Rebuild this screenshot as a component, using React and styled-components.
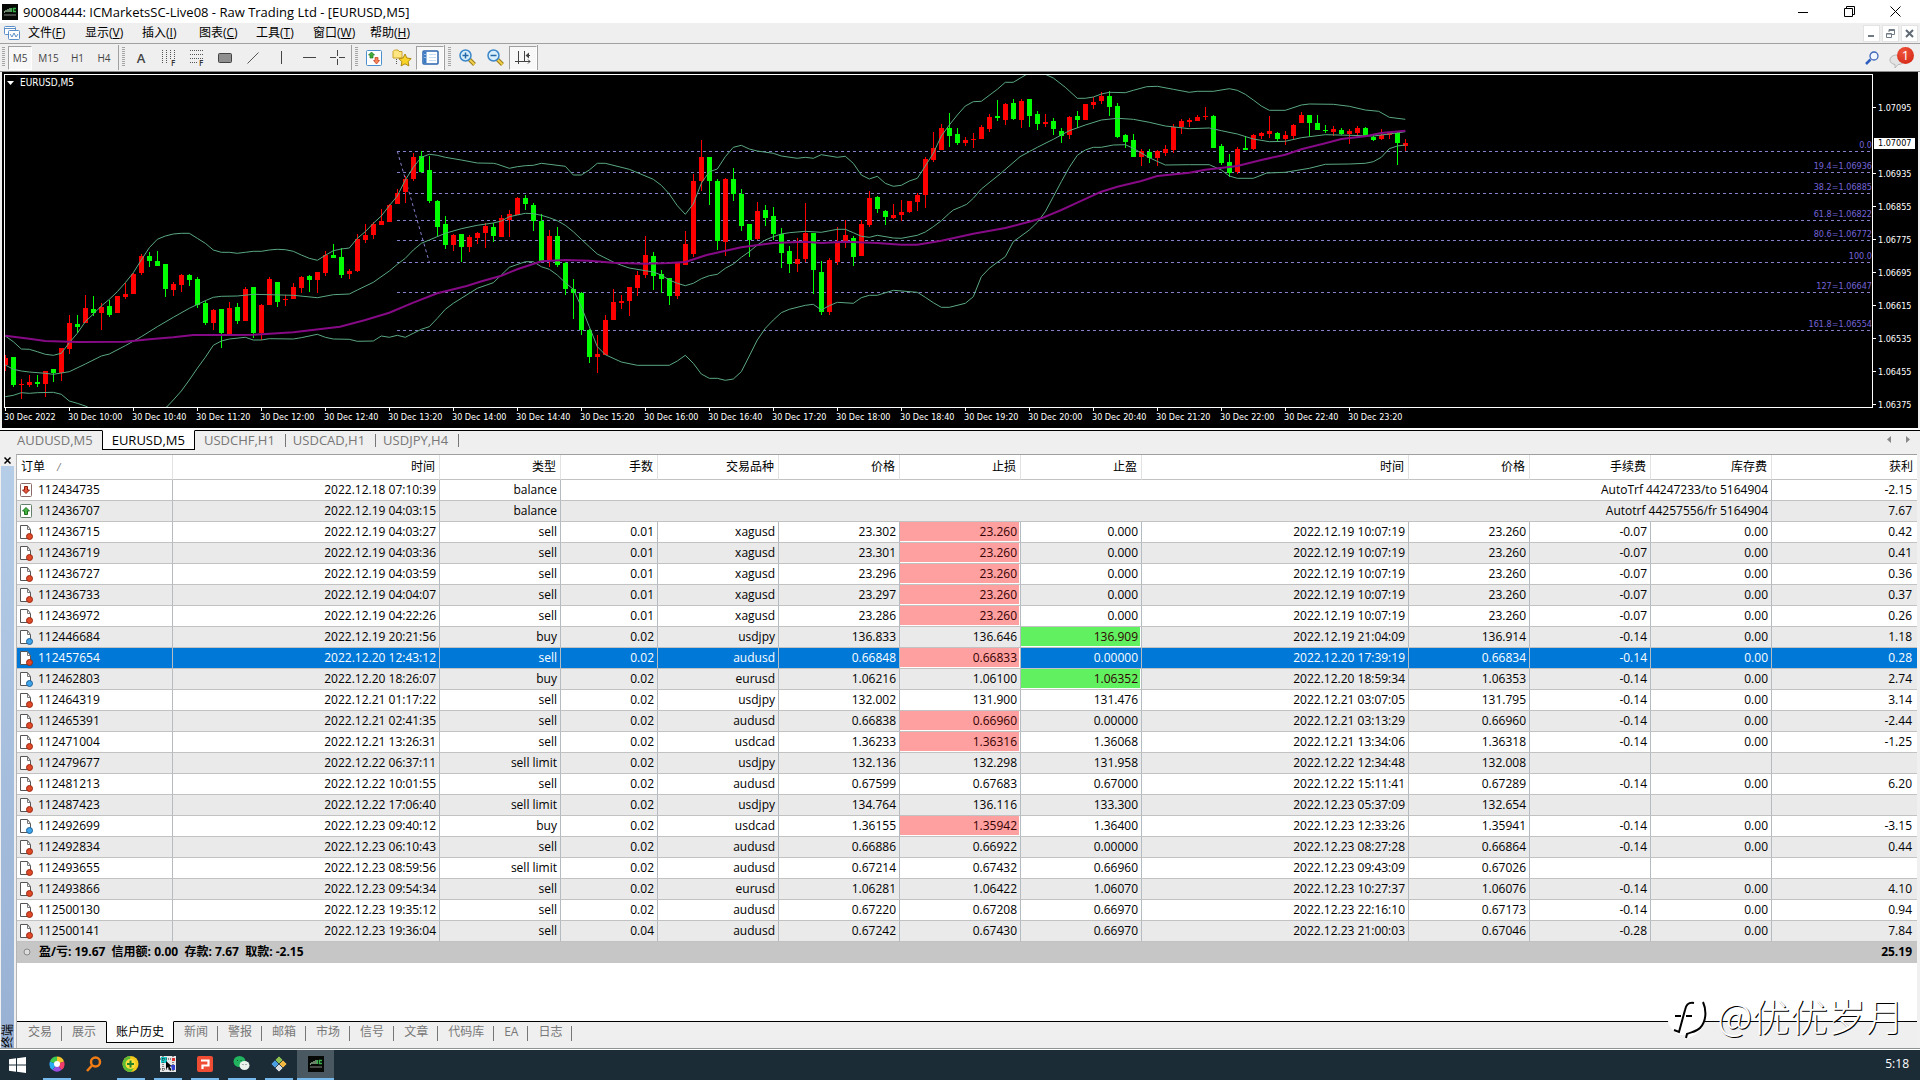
import React, { useState } from 'react';
import styled, { createGlobalStyle, css } from 'styled-components';

const GlobalStyle = createGlobalStyle`
  * {
    box-sizing: border-box;
  }
  body {
    margin: 0;
    background: #f0f0f0;
    font-family: "Open Sans", "Noto Sans CJK SC", sans-serif;
    font-size: 12px;
    line-height: 16px;
    color: #000;
  }
  button {
    font: inherit;
    color: inherit;
    background: none;
    border: none;
    padding: 0;
    margin: 0;
  }
  svg {
    display: block;
    flex-shrink: 0;
  }
`;

/* ---------- data ---------- */

const menus = ['文件(F)', '显示(V)', '插入(I)', '图表(C)', '工具(T)', '窗口(W)', '帮助(H)'];
const frames = [['M5', 24], ['M15', 33], ['H1', 25], ['H4', 28]];
const chartTabs = ['AUDUSD,M5', 'EURUSD,M5', 'USDCHF,H1', 'USDCAD,H1', 'USDJPY,H4'];
const panelTabs = ['交易', '展示', '账户历史', '新闻', '警报', '邮箱', '市场', '信号', '文章', '代码库', 'EA', '日志'];

const times = ['2022', '10:00', '10:40', '11:20', '12:00', '12:40', '13:20', '14:00', '14:40', '15:20', '16:00', '16:40',
  '17:20', '18:00', '18:40', '19:20', '20:00', '20:40', '21:20', '22:00', '22:40', '23:20'];
const prices = ['1.07095', '', '1.06935', '1.06855', '1.06775', '1.06695', '1.06615', '1.06535', '1.06455', '1.06375'];

const fibs = [
  [76, '0.0'], [97, '19.4=1.06936'], [118, '38.2=1.06885'], [145, '61.8=1.06822'],
  [165, '80.6=1.06772'], [187, '100.0'], [217, '127=1.06647'], [255, '161.8=1.06554'],
];

// colour, body top, body bottom, high, low - three units to a pixel
const candles = `r893,915,885,932 g892,974,892,980 r971,975,958,1018 r965,974,945,980 g966,972,945,980 r933,971,933,1012
g927,938,927,967 r864,940,864,962 r789,866,765,881 g792,800,765,820 r744,788,706,788 g747,758,708,768 r740,758,728,810
g738,764,720,770 r709,758,709,758 r702,710,668,718 r642,701,640,701 r588,638,583,645 g588,602,576,620 g603,617,572,617
g612,686,612,710 r672,689,666,708 r645,675,642,695 g645,660,641,677 g657,734,652,745 g730,788,723,794 r750,790,746,810
g747,818,747,863 r744,822,727,826 g741,782,730,792 r687,782,682,782 g682,818,682,833 r735,818,731,840 r657,734,651,734
g667,725,667,740 r716,720,705,738 r682,716,668,716 r652,684,648,698 g648,659,645,696 r636,660,636,698 r586,638,574,648
g586,594,551,594 g592,644,565,654 r633,641,627,656 r538,633,522,636 r526,541,493,550 r493,525,487,538 r484,494,446,494
r436,486,432,486 r400,432,388,432 r358,395,348,430 r291,356,280,364 g289,336,273,338 g331,422,288,428 g423,500,420,528
g492,554,468,566 r525,556,521,574 g522,560,522,606 r532,560,526,575 r519,534,515,553 r499,519,490,565 g501,528,490,545
r473,530,466,530 r462,480,450,530 r414,466,411,466 g414,432,405,450 g435,482,430,512 g483,602,462,606 r528,600,511,620
g528,615,500,620 g608,687,606,706 g688,698,656,776 g699,811,697,824 g811,890,808,910 r882,890,826,938 r780,884,766,884
r726,780,688,780 r723,728,705,748 r682,724,680,768 r645,684,634,708 r586,645,528,655 g588,647,577,690 g642,656,630,698
g655,707,655,735 r610,708,608,718 r552,614,514,614 r363,581,343,592 r291,363,241,392 g291,362,291,435 g364,542,356,570
r357,545,354,588 g357,402,323,424 g402,498,387,512 g492,540,492,590 r453,537,426,540 g450,474,434,498 g468,522,440,540
g522,579,504,624 g573,612,558,640 r598,611,534,637 r519,597,430,605 g519,629,519,702 g637,756,603,764 r600,756,594,766
r546,606,500,615 r525,550,480,563 g534,590,528,618 r492,587,480,587 r414,494,394,502 g411,447,408,460 g453,470,450,494
r465,474,432,478 r457,465,420,482 r423,456,423,460 r405,426,400,454 r297,405,291,444 r265,300,216,305 r205,270,193,270
g204,228,160,262 g222,250,204,255 r240,248,231,258 r236,240,220,265 r201,236,194,236 r171,207,163,215 g168,174,120,184
r131,180,130,195 g130,178,117,180 r123,180,117,204 g117,167,117,200 g162,192,153,210 r187,193,163,200 g183,207,175,226
g213,228,205,250 r171,226,168,237 g168,180,154,205 r132,180,132,180 r126,135,112,148 r108,123,97,132 g108,141,94,168
g138,231,130,234 g225,247,222,264 g240,291,222,291 r272,291,268,318 g276,294,268,308 r273,294,270,318 r267,278,255,288
r201,270,192,278 r183,201,178,222 r181,185,173,200 r172,182,165,184 r168,171,140,180 g168,264,164,264 g258,309,252,315
g307,339,282,352 r267,336,260,342 g265,270,228,270 r226,267,222,270 r220,228,216,237 r213,221,168,235 g219,237,216,246
r225,238,213,254 r196,229,192,237 r166,189,156,189 g166,188,164,228 g189,210,165,210 g210,214,195,219 r207,216,198,228
g210,222,204,225 r213,221,208,252 r204,219,198,232 g204,225,200,228 g230,241,225,243 r225,238,208,240 r220,226,215,238
g220,249,215,316 r249,258,236,274`.split(/\s+/).map((s) => [s[0], ...s.slice(1).split(',').map(Number)]);

// each line comes in parts, a part starts at its own x
const upper = [
  [0, '16,828 40,845 64,867 88,868 112,875 136,883 160,886 184,880 208,848 232,820 256,785 280,762 304,738 328,718 352,695 376,668 400,638 424,600 448,563 472,538 496,528 520,522 544,520 568,520 592,535 616,550 640,570 664,577 688,577 712,580 736,577 760,574 784,574 808,570 832,568 856,569 880,574 904,585 928,595 952,601 976,586 1000,572 1024,567 1048,564 1072,535 1096,515 1120,490 1144,468 1168,437 1192,408 1216,360 1240,322 1264,292 1288,283 1312,286 1336,292 1384,300 1432,309'],
  [1440, '40,310 50,312 88,325 112,320 136,317 160,316 184,310 256,319 280,345 304,345 328,330 352,310 376,310 448,328 520,358 544,376 568,402 592,437 616,463 640,432 664,370 688,335 712,327 736,290 760,262 784,256 808,267 832,273 880,280 904,288 952,295 976,292 1000,295 1024,284 1072,292 1096,289 1120,310 1144,345 1168,357 1192,349 1216,370 1240,379 1264,376 1288,363 1312,355 1336,318 1360,280 1384,228 1408,195 1432,165 1456,138 1480,125'],
  [2700, '244,124 292,88 316,67 340,67 380,43 436,43 460,54 496,82 532,115 556,115 580,111 604,102 628,97 676,98 700,91 740,80 772,79 820,88 868,97 892,94 940,94 988,86 1012,91 1036,103 1060,120 1084,138 1108,151 1156,151 1204,135 1228,132 1300,133 1348,139 1396,150 1436,154 1468,172 1516,178'],
];
const middle = [
  [0, '16,915 40,928 64,933 88,936 136,940 160,943 208,935 256,912 304,888 328,882 376,857 424,830 472,800 520,772 568,745 616,722 640,712 664,709 712,708 760,703 880,706 952,713 1000,704 1048,702 1072,690 1120,667 1168,633 1192,613 1216,595 1240,570 1264,550 1288,540 1336,520 1384,506 1432,496 1480,489'],
  [1440, '64,483 88,470 112,465 136,460 160,461 184,466 208,473 232,482 256,496 280,515 304,538 328,560 352,582 400,606 424,616 448,624 496,632 520,636 544,645 568,660 592,670 616,677 640,670 664,656 688,647 712,643 736,625 760,612 784,592 808,575 832,555 856,540 880,530 904,522 928,518 976,514 1024,517 1072,508 1096,508 1120,518 1144,529 1168,532 1192,526 1240,534 1264,535 1312,526 1336,516 1360,500 1384,482 1408,460'],
  [2700, '160,450 184,440 200,433 220,415 244,387 300,342 360,290 412,262 460,238 508,212 556,195 604,180 652,175 700,178 748,187 796,198 868,206 928,204 964,212 1012,222 1060,237 1108,245 1156,244 1204,233 1276,224 1348,226 1420,228 1468,222 1516,215'],
];
const lower = [
  [0, '16,1010 40,1006 64,998 88,1000 112,998 160,997 184,1003 208,1023 232,1030 256,1038 272,1046 490,1050 500,1041 520,1020 544,993 568,960 592,925 616,892 640,856 664,843 688,837 736,832 760,840 784,840 808,836 880,837 904,833 952,823 976,832 1000,837 1048,838 1072,844 1120,843 1144,828 1168,832 1192,826 1216,832 1240,820 1264,808 1288,800 1312,775 1336,748 1360,730 1408,700 1432,685'],
  [1440, '40,668 64,645 88,622 136,605 160,605 184,620 208,628 232,645 256,668 280,688 304,740 328,800 352,860 376,884 424,906 472,916 568,916 592,903 616,886 640,910 664,942 688,955 712,955 736,961 760,957 784,935 808,888 832,840 856,805 880,780 904,758 928,748 976,736 1000,733 1024,750 1048,737 1072,727 1120,730 1144,713 1168,706 1192,706 1240,691 1312,697 1336,712 1360,728 1384,742 1408,742 1456,730'],
  [2700, '220,710 244,650 268,625 292,607 316,590 340,545 388,510 412,487 436,455 460,410 484,365 508,322 532,286 556,270 580,262 604,262 640,255 676,254 700,265 748,293 796,315 868,314 928,314 964,330 988,348 1012,355 1060,355 1100,339 1156,337 1228,325 1276,313 1348,312 1396,310 1420,305 1444,292 1468,266 1492,258 1516,255'],
];
const average = [
  [0, '16,827 88,836 136,843 232,846 376,845 448,838 520,832 580,825 700,825 760,824 880,817 1020,800 1096,780 1168,758 1240,728 1312,700 1400,678'],
  [1440, '0,665 64,647 112,628 184,604 256,600 328,602 400,608 496,611 568,609 616,606 680,585 784,562 880,549 976,545 1024,549 1096,545 1192,549 1264,554 1312,554 1384,542'],
  [2700, '220,521 316,504 388,485 424,475 484,450 532,428 604,395 652,380 724,363 772,348 868,338 916,329 1012,318 1084,300 1156,284 1204,268 1276,250 1324,237 1396,229 1444,219 1516,212'],
];

const X = (v) => v / 3 - 5;
const Y = (v) => v / 3 - 15;
const toPoints = (parts) =>
  parts.map(([dx, pts]) => pts.split(' ').map((p) => {
    const [x, y] = p.split(',').map(Number);
    return `${X(x + dx).toFixed(1)},${Y(y).toFixed(1)}`;
  }).join(' ')).join(' ');

const columns = [
  ['订单', 156], ['时间', 267], ['类型', 121], ['手数', 97], ['交易品种', 121], ['价格', 121], ['止损', 121],
  ['止盈', 121], ['时间', 267], ['价格', 121], ['手续费', 121], ['库存费', 121], ['获利', null],
];

// last value: 'sl' paints the stop loss cell, 'tp' the take profit one
const orders = [
  ['112436715', '2022.12.19 04:03:27', 'sell', '0.01', 'xagusd', '23.302', '23.260', '0.000', '2022.12.19 10:07:19', '23.260', '-0.07', '0.00', '0.42', 'sl'],
  ['112436719', '2022.12.19 04:03:36', 'sell', '0.01', 'xagusd', '23.301', '23.260', '0.000', '2022.12.19 10:07:19', '23.260', '-0.07', '0.00', '0.41', 'sl'],
  ['112436727', '2022.12.19 04:03:59', 'sell', '0.01', 'xagusd', '23.296', '23.260', '0.000', '2022.12.19 10:07:19', '23.260', '-0.07', '0.00', '0.36', 'sl'],
  ['112436733', '2022.12.19 04:04:07', 'sell', '0.01', 'xagusd', '23.297', '23.260', '0.000', '2022.12.19 10:07:19', '23.260', '-0.07', '0.00', '0.37', 'sl'],
  ['112436972', '2022.12.19 04:22:26', 'sell', '0.01', 'xagusd', '23.286', '23.260', '0.000', '2022.12.19 10:07:19', '23.260', '-0.07', '0.00', '0.26', 'sl'],
  ['112446684', '2022.12.19 20:21:56', 'buy', '0.02', 'usdjpy', '136.833', '136.646', '136.909', '2022.12.19 21:04:09', '136.914', '-0.14', '0.00', '1.18', 'tp'],
  ['112457654', '2022.12.20 12:43:12', 'sell', '0.02', 'audusd', '0.66848', '0.66833', '0.00000', '2022.12.20 17:39:19', '0.66834', '-0.14', '0.00', '0.28', 'sl'],
  ['112462803', '2022.12.20 18:26:07', 'buy', '0.02', 'eurusd', '1.06216', '1.06100', '1.06352', '2022.12.20 18:59:34', '1.06353', '-0.14', '0.00', '2.74', 'tp'],
  ['112464319', '2022.12.21 01:17:22', 'sell', '0.02', 'usdjpy', '132.002', '131.900', '131.476', '2022.12.21 03:07:05', '131.795', '-0.14', '0.00', '3.14', ''],
  ['112465391', '2022.12.21 02:41:35', 'sell', '0.02', 'audusd', '0.66838', '0.66960', '0.00000', '2022.12.21 03:13:29', '0.66960', '-0.14', '0.00', '-2.44', 'sl'],
  ['112471004', '2022.12.21 13:26:31', 'sell', '0.02', 'usdcad', '1.36233', '1.36316', '1.36068', '2022.12.21 13:34:06', '1.36318', '-0.14', '0.00', '-1.25', 'sl'],
  ['112479677', '2022.12.22 06:37:11', 'sell limit', '0.02', 'usdjpy', '132.136', '132.298', '131.958', '2022.12.22 12:34:48', '132.008', '', '', '', ''],
  ['112481213', '2022.12.22 10:01:55', 'sell', '0.02', 'audusd', '0.67599', '0.67683', '0.67000', '2022.12.22 15:11:41', '0.67289', '-0.14', '0.00', '6.20', ''],
  ['112487423', '2022.12.22 17:06:40', 'sell limit', '0.02', 'usdjpy', '134.764', '136.116', '133.300', '2022.12.23 05:37:09', '132.654', '', '', '', ''],
  ['112492699', '2022.12.23 09:40:12', 'buy', '0.02', 'usdcad', '1.36155', '1.35942', '1.36400', '2022.12.23 12:33:26', '1.35941', '-0.14', '0.00', '-3.15', 'sl'],
  ['112492834', '2022.12.23 06:10:43', 'sell', '0.02', 'audusd', '0.66886', '0.66922', '0.00000', '2022.12.23 08:27:28', '0.66864', '-0.14', '0.00', '0.44', ''],
  ['112493655', '2022.12.23 08:59:56', 'sell limit', '0.02', 'audusd', '0.67214', '0.67432', '0.66960', '2022.12.23 09:43:09', '0.67026', '', '', '', ''],
  ['112493866', '2022.12.23 09:54:34', 'sell', '0.02', 'eurusd', '1.06281', '1.06422', '1.06070', '2022.12.23 10:27:37', '1.06076', '-0.14', '0.00', '4.10', ''],
  ['112500130', '2022.12.23 19:35:12', 'sell', '0.02', 'audusd', '0.67220', '0.67208', '0.66970', '2022.12.23 22:16:10', '0.67173', '-0.14', '0.00', '0.94', ''],
  ['112500141', '2022.12.23 19:36:04', 'sell', '0.04', 'audusd', '0.67242', '0.67430', '0.66970', '2022.12.23 21:00:03', '0.67046', '-0.28', '0.00', '7.84', ''],
];
const balances = [
  ['112434735', '2022.12.18 07:10:39', 'AutoTrf 44247233/to 5164904', '-2.15'],
  ['112436707', '2022.12.19 04:03:15', 'Autotrf 44257556/fr 5164904', '7.67'],
];

/* ---------- styles ---------- */

const Page = styled.div`
  min-height: 100vh;
  display: flex;
  flex-direction: column;
`;

const TitleBar = styled.header`
  display: flex;
  align-items: center;
  height: 23px;
  padding: 0 2px;
  background: #fff;
`;

const Title = styled.h1`
  flex: 1;
  margin: 0 0 0 5px;
  font-size: 13px;
  font-weight: 400;
`;

const WindowButton = styled.button`
  width: 46px;
  height: 22px;
  display: flex;
  align-items: center;
  justify-content: center;
`;

const MenuBar = styled.nav`
  display: flex;
  align-items: center;
  height: 21px;
  padding: 0 2px 0 4px;
  border-bottom: 1px solid #a0a0a0;
  background: #efefef;
`;

const MenuButton = styled.button`
  width: 57px;
  text-align: left;
  white-space: nowrap;
  u {
    text-underline-offset: 1px;
  }
`;

const MenuItems = styled.div`
  display: flex;
  flex: 1;
  margin-left: 8px;
`;

const MdiButton = styled.button`
  width: 17px;
  height: 17px;
  margin-left: 2px;
  display: flex;
  align-items: center;
  justify-content: center;
  background: #fff;
  border: 1px solid #e3e3e3;
`;

const ToolBar = styled.div`
  display: flex;
  align-items: center;
  height: 28px;
  padding-right: 6px;
  background: #efefef;
  border-bottom: 1px solid #8a8a8a;
`;

const Grip = styled.span`
  width: ${(p) => (p.$first ? 8 : 9)}px;
  height: 25px;
  flex-shrink: 0;
  border-left: ${(p) => (p.$first ? 'none' : '1px solid #a0a0a0')};
  &::before {
    content: '';
    display: block;
    width: 3px;
    height: 20px;
    margin: 2px 0 0 ${(p) => (p.$first ? 2 : 3)}px;
    background: repeating-linear-gradient(#a5a5a5 0 1px, #efefef 1px 2px);
  }
`;

const ToolButton = styled.button`
  width: ${(p) => p.$w || 28}px;
  height: 24px;
  display: flex;
  align-items: center;
  justify-content: center;
  font-size: 10px;
  color: #444;
  ${(p) => p.$pressed && css`
    background: #f8f8f8;
    border: 1px solid #a0a0a0;
    border-right-color: #fff;
    border-bottom-color: #fff;
  `}
`;

const TextTool = styled.span`
  font-size: 13px;
  font-weight: 600;
`;

const ToolBarEnd = styled.span`
  height: 25px;
  border-left: 1px solid #a0a0a0;
`;

const Spacer = styled.div`
  flex: 1;
`;

const Alerts = styled.button`
  position: relative;
  width: 25px;
  height: 22px;
  margin-left: 10px;
`;

const AlertCount = styled.span`
  position: absolute;
  top: 0;
  right: 0;
  width: 17px;
  height: 17px;
  border-radius: 50%;
  background: radial-gradient(circle at 40% 30%, #f0553c, #cf2010);
  color: #fff;
  font-size: 13px;
  line-height: 17px;
  text-align: center;
`;

const ChartWindow = styled.section`
  display: grid;
  grid-template-columns: 1fr 45px;
  grid-template-rows: 334px 20px;
  padding: 2px 0 0 2px;
  margin: 0 2px;
  background: #000;
  color: #fff;
  font-family: "DejaVu Sans Condensed", "Open Sans", sans-serif;
  font-size: 9px;
  line-height: 12px;
`;

const Plot = styled.div`
  position: relative;
  border: 1px solid #fff;
  overflow: hidden;
`;

const Drawing = styled.svg`
  width: 100%;
  height: 332px;
`;

const Symbol = styled.div`
  position: absolute;
  left: 2px;
  top: 2px;
  display: flex;
  align-items: center;
  gap: 6px;
  font-size: 10px;
`;

const FibLabel = styled.text`
  fill: #7464d8;
  text-anchor: end;
`;

const PriceAxis = styled.div`
  position: relative;
  height: 352px;
  padding-top: 17px;
`;

const Price = styled.div`
  height: 33px;
  display: flex;
  align-items: center;
  gap: 2px;
  &:not(:empty)::before {
    content: '';
    width: 3px;
    height: 1px;
    background: #fff;
  }
`;

const Bid = styled.div`
  position: absolute;
  left: 1px;
  top: 64px;
  width: 41px;
  padding-left: 4px;
  line-height: 11px;
  background: #fff;
  color: #000;
`;

const TimeAxis = styled.div`
  display: flex;
  overflow: hidden;
`;

const Time = styled.div`
  width: 64px;
  flex-shrink: 0;
  white-space: nowrap;
  &::before {
    content: '';
    display: block;
    width: 1px;
    height: 3px;
    margin-left: 1px;
    background: #fff;
  }
`;

const ChartTabs = styled.div`
  display: flex;
  height: 24px;
  margin-top: 2px;
  align-items: flex-start;
  padding-right: 5px;
  border-top: 1px solid #000;
  box-shadow: 0 -2px 0 #fff;
  background: #efefef;
`;

const ChartTab = styled.button`
  height: 19px;
  padding: 0 8px 0 ${(p) => (p.$first ? 17 : 9)}px;
  font-size: 13px;
  line-height: 18px;
  color: #777;
  display: flex;
  &::after {
    content: '';
    width: 1px;
    height: 13px;
    margin: 3px -10px 0 10px;
    background: ${(p) => (p.$plain ? 'transparent' : '#777')};
  }
  ${(p) => p.$active && css`
    height: 20px;
    margin-top: -1px;
    background: #fff;
    color: #000;
    border: 1px solid #000;
    border-top-color: #fff;
  `}
`;

const Scrollers = styled.div`
  display: flex;
  gap: 15px;
  margin: 5px 5px 0 auto;
`;

const Terminal = styled.section`
  flex: 1;
  display: grid;
  grid-template-columns: 16px 1fr 3px;
`;

const Side = styled.aside`
  display: flex;
  flex-direction: column;
  align-items: center;
  padding-right: 1px;
`;

const SideClose = styled.button`
  width: 12px;
  height: 12px;
  display: flex;
  align-items: center;
  justify-content: center;
`;

const SideGrip = styled.div`
  flex: 1;
  width: 13px;
  display: flex;
  align-items: flex-end;
  justify-content: center;
  background: linear-gradient(#b6cde8, #98b0d3);
  font-size: 12px;
  line-height: 13px;
  span {
    writing-mode: vertical-rl;
    text-orientation: sideways;
    transform: rotate(180deg);
  }
`;

const TerminalBody = styled.div`
  display: flex;
  flex-direction: column;
  min-width: 0;
  background: #fff;
  border-top: 1px solid #a0a0a0;
  border-left: 1px solid #b5b5b5;
`;

const Table = styled.table`
  width: 100%;
  table-layout: fixed;
  border-collapse: separate;
  border-spacing: 0;
`;

const Col = styled.col`
  width: ${(p) => (p.$w ? `${p.$w}px` : 'auto')};
`;

const Th = styled.th`
  height: 25px;
  padding: 0 4px;
  font-weight: 400;
  text-align: right;
  border-bottom: 1px solid #c2c2c2;
  border-right: 1px solid #e2e2e2;
  &:first-child {
    text-align: left;
  }
  &:last-child {
    border-right: none;
  }
  i {
    margin-left: 12px;
    font-size: 10px;
    color: #777;
  }
`;

const Row = styled.tr`
  background: ${(p) => (p.$selected ? '#0078d7' : '#fff')};
  color: ${(p) => (p.$selected ? '#fff' : '#000')};
  &:nth-child(even) {
    background: #eaeaea;
  }
`;

const hitColors = { sl: '#ffa0a0', tp: '#60f060' };

const Td = styled.td`
  height: 21px;
  padding: 0 3px 0 2px;
  line-height: 16px;
  text-align: right;
  white-space: nowrap;
  border-bottom: 1px solid #c2c2c2;
  border-right: 1px solid #b4bcc2;
  &:last-child {
    border-right: none;
    padding-right: 5px;
  }
  ${(p) => p.$hit && css`
    color: #300;
    background: ${hitColors[p.$hit]};
    box-shadow: inset -1px -1px 0 #fff;
  `}
`;

const Order = styled.div`
  display: flex;
  align-items: center;
  gap: 4px;
`;

const SumCell = styled.td`
  height: 21px;
  padding: 0 5px 2px 6px;
  font-weight: 700;
  background: #c6c6c6;
  text-align: ${(p) => (p.$right ? 'right' : 'left')};
`;

const Sums = styled.div`
  display: flex;
  align-items: center;
  gap: 8px;
`;

const PanelTabs = styled.div`
  display: flex;
  height: 27px;
  padding-left: 1px;
  background: #efefef;
  border-top: 1px solid #000;
`;

const PanelTab = styled.button`
  height: 20px;
  padding: 0 10px;
  color: #777;
  white-space: nowrap;
  position: relative;
  &::after {
    content: '';
    position: absolute;
    right: 0;
    top: 4px;
    width: 1px;
    height: 15px;
    background: ${(p) => (p.$plain ? 'transparent' : '#777')};
  }
  ${(p) => p.$active && css`
    height: 22px;
    margin-top: -1px;
    padding: 0 9px;
    color: #000;
    background: #fff;
    border: 1px solid #000;
    border-top-color: #fff;
  `}
`;

const TaskBar = styled.footer`
  display: flex;
  height: 32px;
  border-top: 1px solid #8e9496;
  box-shadow: inset 0 1px 0 #fff;
  padding-top: 1px;
  background: #1b2c37;
  color: #fff;
`;

const StartButton = styled.button`
  width: 38px;
  padding-left: 9px;
`;

const TaskButton = styled.button`
  width: 37px;
  height: 30px;
  display: flex;
  flex-direction: column;
  align-items: center;
  justify-content: space-between;
  padding-top: 6px;
  background: ${(p) => (p.$active ? '#4a5861' : 'transparent')};
  &::after {
    content: '';
    height: 2px;
    width: ${(p) => (p.$active ? 37 : 28)}px;
    background: ${(p) => (p.$running ? '#76b9ed' : 'transparent')};
  }
`;

const Clock = styled.time`
  margin: 6px 11px 0 auto;
`;

const Watermark = styled.div`
  position: absolute;
  right: 16px;
  bottom: 36px;
  display: flex;
  align-items: center;
  gap: 8px;
  color: #fff;
  font-family: "Noto Sans CJK SC", sans-serif;
  font-size: 38px;
  font-weight: 300;
  line-height: 42px;
  text-shadow: 1px 1px 0 #000;
  span {
    margin-bottom: 8px;
  }
`;

/* ---------- icons ---------- */

const AppIcon = () => (
  <svg width="16" height="16" viewBox="0 0 16 16">
    <rect width="16" height="16" fill="#050805" />
    <path d="M2 8h1M4 8V6M6 8V5M8 8V4" stroke="#9fc89f" strokeWidth="1.300" />
    <path d="M9.500 4v4M14 4.500h-2.500v3H14" stroke="#37b34a" strokeWidth="1.300" fill="none" />
    <path d="M2 11h12" stroke="#8a8a8a" />
  </svg>
);

const ChartsIcon = () => (
  <svg width="16" height="16" viewBox="0 0 16 16" fill="#fff" stroke="#5c8fc8">
    <rect x=".5" y="1.500" width="11" height="8" rx="1" />
    <path d="M1 3.500h10" />
    <rect x="4.500" y="5.500" width="11" height="9" rx="1" />
    <path d="M6 9l2 3 2-4 2 4 2-3" fill="none" />
  </svg>
);

const GridIcon = ({ d }) => (
  <svg width="18" height="24" viewBox="-1 -3 18 24">
    <path d={d} stroke="#555" strokeDasharray="1 1" />
    <text x="10" y="17" fontSize="8" fontWeight="600" fill="#333">F</text>
  </svg>
);

const tools = [
  ['Text', <TextTool>A</TextTool>],
  ['Time zones', <GridIcon d="M1.500 1v14M5.500 1v14M9.500 1v9M13.500 1v9" />],
  ['Fibonacci', <GridIcon d="M1 1.500h14M1 5.500h14M1 9.500h14M1 13.500h8" />],
  ['Rectangle', <svg width="14" height="10" viewBox="0 0 14 10"><rect x=".5" y=".5" width="13" height="9" rx="1" fill="#8f8f8f" stroke="#444" /></svg>],
  ['Trend line', <svg width="12" height="12" viewBox="0 0 12 12" stroke="#555"><path d="M.5 11.500l11-11" /></svg>],
  ['Vertical line', <svg width="3" height="13" viewBox="0 0 3 13" stroke="#444"><path d="M1.500 0v13" /></svg>],
  ['Horizontal line', <svg width="13" height="3" viewBox="0 0 13 3" stroke="#444"><path d="M0 1.500h13" /></svg>],
  ['Crosshair', <svg width="15" height="15" viewBox="0 0 15 15" stroke="#444"><path d="M7.500 0v6M7.500 9v6M0 7.500h6M9 7.500h6" /></svg>],
];

const MarketIcon = () => (
  <svg width="16" height="16" viewBox="0 0 16 16">
    <rect x=".5" y=".5" width="15" height="15" rx="1" fill="#fff" stroke="#4a90d0" />
    <path d="M5.500 2 8.500 5H7v3H4V5H2.500z" fill="#3fae3a" stroke="#23751f" strokeWidth=".7" />
    <path d="M9 7.500h3v3h1.500l-3 3.500-3-3.500H9z" fill="#f5825a" stroke="#c33d1c" strokeWidth=".7" />
  </svg>
);

const StarIcon = () => (
  <svg width="20" height="18" viewBox="0 0 20 18">
    <path d="M1 2.500 2.500 1H6l1 1.500h3V9H1z" fill="#ffe680" stroke="#c9a227" />
    <path d="M4.500 10v6" stroke="#555" strokeDasharray="1 1" />
    <path d="m13 5 1.900 4 4.300.600-3.100 3 .8 4.300-3.900-2.100-3.900 2.100.8-4.300-3.100-3 4.300-.6z" fill="#f9d327" stroke="#b08a10" />
  </svg>
);

const NavigatorIcon = () => (
  <svg width="17" height="15" viewBox="0 0 17 15">
    <rect x="1" y="1" width="15" height="13" rx="1" fill="#fff" stroke="#2c66ae" strokeWidth="1.500" />
    <path d="M1.500 1.500h3v12h-3z" fill="#3c7cc4" />
    <path d="M7 4.500h7M7 7.500h7M7 10.500h7" stroke="#c4dcf4" />
    <path d="M3 4v1M3 7v1" stroke="#fff" />
  </svg>
);

const ZoomIcon = ({ plus }) => (
  <svg width="17" height="17" viewBox="0 0 17 17">
    <path d="m10 10 5.500 5.500" stroke="#9b7d1c" strokeWidth="4" />
    <path d="m10 10 5.500 5.500" stroke="#f1d04a" strokeWidth="2" />
    <circle cx="6.500" cy="6.500" r="5.500" fill="#d9eefb" stroke="#3b87c8" strokeWidth="1.500" />
    <path d={plus ? 'M3.500 6.500h6M6.500 3.500v6' : 'M3.500 6.500h6'} stroke="#2468a8" strokeWidth="1.500" />
  </svg>
);

const ShiftIcon = () => (
  <svg width="16" height="15" viewBox="0 0 16 15" fill="none" stroke="#444">
    <path d="M3.500 1v13M9.500 1v10M0 11.500h15M13 9.500l2 2-2 2" />
    <path d="M15 5.500h-2" />
    <path d="M14 2.500v6l-3.500-3z" fill="#444" stroke="none" />
  </svg>
);

const SearchIcon = () => (
  <svg width="14" height="14" viewBox="0 0 14 14" fill="none">
    <path d="M1 13 5.500 8.500" stroke="#2e5fc0" strokeWidth="2.500" />
    <circle cx="9" cy="5" r="4" fill="#f2f7ff" stroke="#3f66b8" strokeWidth="1.300" />
  </svg>
);

const BubbleIcon = () => (
  <svg width="18" height="20" viewBox="0 0 18 20">
    <path d="M8 7c4 0 7 2 7 5s-3 4.500-6 4.500L6 20v-3.500c-3-.5-5-2-5-4.500 0-3 3-5 7-5z" fill="#e4e4e4" stroke="#b8b8b8" />
  </svg>
);

const TransferIcon = ({ up }) => (
  <svg width="15" height="15" viewBox="0 0 15 15">
    <rect x="1.500" y=".5" width="11" height="13" rx="1" fill="#fff" stroke={up ? '#64806a' : '#8a6a6a'} />
    {up
      ? <path d="M7 3.500l3.500 3.500h-2v3.500h-3V7h-2z" fill="#44b344" stroke="#1c731c" />
      : <path d="M7 10.500 3.500 7h2V3.500h3V7h2z" fill="#e2563c" stroke="#951d10" />}
  </svg>
);

const DocIcon = ({ buy }) => (
  <svg width="15" height="15" viewBox="0 0 15 15">
    <path d="M1.500.5h7l3 4v9h-10z" fill="#fff" stroke="#555" />
    <path d="M8.500.5v4h3" fill="none" stroke="#777" />
    <circle cx="10.500" cy="11.500" r="3" fill={buy ? '#3ea5ea' : '#e04a28'} stroke={buy ? '#1c6299' : '#9c2810'} />
  </svg>
);

const WindowsIcon = () => (
  <svg width="17" height="16" viewBox="0 0 17 16" fill="#fff">
    <path d="M0 2.300 7 1.300v6.200H0zM8 1.200 17 0v7.500H8zM0 8.500h7v6.200l-7-1zM8 8.500h9V16l-9-1.200z" />
  </svg>
);

const tasks = [
  ['Browser', <svg width="16" height="16" viewBox="0 0 16 16" fill="none" strokeWidth="5">
    <path d="M8 3a5 5 0 0 1 4.700 3.300" stroke="#f5c62c" /><path d="M12.700 6.300A5 5 0 0 1 11 12" stroke="#f23c6a" />
    <path d="M11 12a5 5 0 0 1-6 0" stroke="#9b4de0" /><path d="M5 12a5 5 0 0 1-1.700-5.700" stroke="#2aa8f0" />
    <path d="M3.300 6.300A5 5 0 0 1 8 3" stroke="#3fc94e" /><circle cx="8" cy="8" r="3" fill="#fff" />
  </svg>],
  ['Search files', <svg width="16" height="16" viewBox="0 0 16 16" fill="none" stroke="#f07c13" strokeWidth="2.500">
    <circle cx="9.500" cy="6" r="4.500" /><path d="M6 9.500 1 15" />
  </svg>],
  ['Guard', <svg width="17" height="16" viewBox="0 0 17 16">
    <circle cx="8.500" cy="8" r="8" fill="#f3c91d" /><path d="M8.500 0a8 8 0 0 0 0 16c3-2 4-5 2-8s-3-6-2-8z" fill="#5cbc36" />
    <circle cx="8.500" cy="8" r="5" fill="#ffe03a" /><path d="M8.500 4.500v7M5 8h7" stroke="#22812a" strokeWidth="2" />
  </svg>],
  ['Capture', <svg width="16" height="16" viewBox="0 0 16 16">
    <rect width="16" height="16" fill="#e8e8e8" /><path d="M1 1h6v6H1z" fill="#18c8c8" /><path d="M0 3h16M3 0v16M13 0v16M0 13h16" stroke="#222" strokeDasharray="1 1" />
    <path d="M6 5v8l2-2 2 4 1.500-1-2-3.500H12z" fill="#000" /><path d="M12 2h3v3h-3z" fill="#e03030" /><path d="M11 9h4v5h-3z" fill="#3040d0" />
  </svg>],
  ['Slides', <svg width="16" height="16" viewBox="0 0 16 16">
    <rect width="16" height="16" rx="2" fill="#ee4d33" /><path d="M4 4.500h7.500v5H5.500V13" fill="none" stroke="#fff" strokeWidth="2.200" />
  </svg>],
  ['Chat', <svg width="17" height="15" viewBox="0 0 17 15">
    <ellipse cx="6.500" cy="5.500" rx="6" ry="5.500" fill="#22b35e" /><ellipse cx="11.500" cy="9.500" rx="5" ry="4.500" fill="#e9f3ec" />
    <path d="M4.500 4v1M8 4v1" stroke="#0d5e2f" /><path d="M10 8v1M13 8v1" stroke="#667" />
  </svg>],
  ['Tiles', <svg width="16" height="16" viewBox="0 0 16 16" stroke="#1b2c37" strokeWidth=".7">
    <path d="m8 0 4 4-4 4-4-4z" fill="#8cc152" /><path d="m4 4 4 4-4 4-4-4z" fill="#4a9ee0" /><path d="m12 4 4 4-4 4-4-4z" fill="#f0b840" /><path d="m8 8 4 4-4 4-4-4z" fill="#d8dde2" />
  </svg>],
  ['Terminal', <AppIcon />],
];

const WatermarkLogo = () => (
  <svg width="42" height="44" viewBox="0 0 42 44">
    <path d="M13 38A19 19 0 1 1 30 36c-3 3-7 4-12 7l1-5z" fill="#fff" />
    <path d="M36 5c4 9 3 20-3 26-4 4-9 4-13 6l-1 4" fill="none" stroke="#000" strokeWidth="2" />
    <path d="M27 6c-6-1-8 2-9 7l-6 22-5-2M8 19h6M19 19h6" fill="none" stroke="#000" strokeWidth="2" />
  </svg>
);

/* ---------- parts ---------- */

function Chart() {
  return (
    <ChartWindow>
      <Plot>
        <Drawing role="img" aria-label="EURUSD,M5">
          <g stroke="#8580cc" strokeDasharray="3 3" shapeRendering="crispEdges">
            {fibs.map(([y]) => <line key={y} x1="392" x2="100%" y1={y + 0.5} y2={y + 0.5} />)}
          </g>
          <line x1={X(1192)} y1={Y(274)} x2={X(1288)} y2={Y(607)} stroke="#8580cc" strokeDasharray="3 3" />
          {fibs.map(([y, label]) => <FibLabel key={label} x="100%" y={y - 3}>{label}</FibLabel>)}
          {candles.map(([color, top, bottom, high, low], i) => {
            const fill = color === 'r' ? '#ff0000' : '#00ff00';
            const y = Math.round(Y(top));
            const wick = Math.round(Y(high));
            return (
              <g key={i} fill={fill} shapeRendering="crispEdges">
                <rect x={i * 8} y={wick} width="1" height={Math.round(Y(low)) - wick} />
                <rect x={i * 8 - 2} y={y} width="5" height={Math.max(1, Math.round(Y(bottom)) - y)} />
              </g>
            );
          })}
          <g fill="none" stroke="#5aa882">
            <polyline points={toPoints(upper)} />
            <polyline points={toPoints(middle)} />
            <polyline points={toPoints(lower)} />
          </g>
          <polyline points={toPoints(average)} fill="none" stroke="#860a86" strokeWidth="2" />
        </Drawing>
        <Symbol>
          <svg width="7" height="4" viewBox="0 0 7 4"><path d="M0 0h7L3.500 4z" fill="#fff" /></svg>
          EURUSD,M5
        </Symbol>
      </Plot>
      <PriceAxis>
        {prices.map((p, i) => <Price key={i}>{p}</Price>)}
        <Bid>1.07007</Bid>
      </PriceAxis>
      <TimeAxis>
        {times.map((t) => <Time key={t}>30 Dec {t}</Time>)}
      </TimeAxis>
    </ChartWindow>
  );
}

function History() {
  const [selected, setSelected] = useState('112457654');
  return (
    <Table>
      <colgroup>
        {columns.map(([, w], i) => <Col key={i} $w={w} />)}
      </colgroup>
      <thead>
        <tr>
          {columns.map(([name], i) => <Th key={i}>{name}{i === 0 && <i>/</i>}</Th>)}
        </tr>
      </thead>
      <tbody>
        {balances.map(([id, time, note, profit], i) => (
          <Row key={id}>
            <Td><Order><TransferIcon up={i === 1} />{id}</Order></Td>
            <Td>{time}</Td>
            <Td>balance</Td>
            <Td colSpan={9}>{note}</Td>
            <Td>{profit}</Td>
          </Row>
        ))}
        {orders.map((o) => {
          const hit = o[13];
          return (
            <Row key={o[0]} $selected={o[0] === selected} onClick={() => setSelected(o[0])}>
              <Td><Order><DocIcon buy={o[2] === 'buy'} />{o[0]}</Order></Td>
              {o.slice(1, 13).map((value, i) => (
                <Td key={i} $hit={(hit === 'sl' && i === 5) || (hit === 'tp' && i === 6) ? hit : undefined}>{value}</Td>
              ))}
            </Row>
          );
        })}
      </tbody>
      <tfoot>
        <tr>
          <SumCell colSpan={12}>
            <Sums>
              <svg width="8" height="8" viewBox="0 0 8 8"><circle cx="4" cy="4" r="3" fill="#ddd" stroke="#888" /></svg>
              <span>盈/亏: 19.67&nbsp; 信用额: 0.00&nbsp; 存款: 7.67&nbsp; 取款: -2.15</span>
            </Sums>
          </SumCell>
          <SumCell $right>25.19</SumCell>
        </tr>
      </tfoot>
    </Table>
  );
}

function App() {
  const [chartTab, setChartTab] = useState(1);
  const [panelTab, setPanelTab] = useState(2);

  return (
    <Page>
      <GlobalStyle />
      <TitleBar>
        <AppIcon />
        <Title>90008444: ICMarketsSC-Live08 - Raw Trading Ltd - [EURUSD,M5]</Title>
        <WindowButton aria-label="Minimize"><svg width="10" height="10" viewBox="0 0 10 10" stroke="#000"><path d="M0 5.500h10" /></svg></WindowButton>
        <WindowButton aria-label="Restore"><svg width="11" height="11" viewBox="0 0 11 11" fill="none" stroke="#000"><path d="M.5 2.500h8v8h-8zM2.500 2.500v-2h8v8h-2" /></svg></WindowButton>
        <WindowButton aria-label="Close"><svg width="11" height="11" viewBox="0 0 11 11" stroke="#000"><path d="m.5.5 10 10M10.500.5l-10 10" /></svg></WindowButton>
      </TitleBar>

      <MenuBar>
        <ChartsIcon />
        <MenuItems>
          {menus.map((m) => (
            <MenuButton key={m}>{m.slice(0, 3)}<u>{m[3]}</u>)</MenuButton>
          ))}
        </MenuItems>
        <MdiButton aria-label="Minimize chart"><svg width="9" height="9" viewBox="0 0 9 9" stroke="#707a84" strokeWidth="2"><path d="M1 7h6" /></svg></MdiButton>
        <MdiButton aria-label="Restore chart"><svg width="9" height="9" viewBox="0 0 9 9" fill="none" stroke="#707a84"><path d="M.5 4.500h5v4h-5zM.5 5h5M3 3V.5h5.500v5H6M3 1.500h5.500" /></svg></MdiButton>
        <MdiButton aria-label="Close chart"><svg width="9" height="9" viewBox="0 0 9 9" stroke="#606a74" strokeWidth="2"><path d="m1 1 7 7M8 1 1 8" /></svg></MdiButton>
      </MenuBar>

      <ToolBar>
        <Grip $first />
        {frames.map(([f, w]) => <ToolButton key={f} $w={w} $pressed={f === 'M5'}>{f}</ToolButton>)}
        <Grip />
        {tools.map(([name, icon]) => <ToolButton key={name} aria-label={name}>{icon}</ToolButton>)}
        <Grip />
        <ToolButton aria-label="Market watch"><MarketIcon /></ToolButton>
        <ToolButton aria-label="Favorites"><StarIcon /></ToolButton>
        <ToolButton aria-label="Navigator" $pressed><NavigatorIcon /></ToolButton>
        <Grip />
        <ToolButton aria-label="Zoom in"><ZoomIcon plus /></ToolButton>
        <ToolButton aria-label="Zoom out"><ZoomIcon /></ToolButton>
        <ToolButton aria-label="Chart shift" $pressed><ShiftIcon /></ToolButton>
        <ToolBarEnd />
        <Spacer />
        <button aria-label="Search"><SearchIcon /></button>
        <Alerts aria-label="Notifications">
          <BubbleIcon />
          <AlertCount>1</AlertCount>
        </Alerts>
      </ToolBar>

      <Chart />

      <ChartTabs>
        {chartTabs.map((t, i) => (
          <ChartTab
            key={t}
            $first={i === 0}
            $active={i === chartTab}
            $plain={i === chartTab || i === chartTab - 1}
            onClick={() => setChartTab(i)}
          >
            {t}
          </ChartTab>
        ))}
        <Scrollers>
          <button aria-label="Previous"><svg width="4" height="7" viewBox="0 0 4 7"><path d="M4 0v7L0 3.500z" fill="#888" /></svg></button>
          <button aria-label="Next"><svg width="4" height="7" viewBox="0 0 4 7"><path d="M0 0v7l4-3.500z" fill="#888" /></svg></button>
        </Scrollers>
      </ChartTabs>

      <Terminal>
        <Side>
          <SideClose aria-label="Close terminal"><svg width="7" height="7" viewBox="0 0 7 7" stroke="#000" strokeWidth="1.500"><path d="m.5.5 6 6M6.500.5l-6 6" /></svg></SideClose>
          <SideGrip><span>终端</span></SideGrip>
        </Side>
        <TerminalBody>
          <History />
          <Spacer />
          <PanelTabs>
            {panelTabs.map((t, i) => (
              <PanelTab
                key={t}
                $active={i === panelTab}
                $plain={i === panelTab || i === panelTab - 1}
                onClick={() => setPanelTab(i)}
              >
                {t}
              </PanelTab>
            ))}
          </PanelTabs>
        </TerminalBody>
      </Terminal>

      <TaskBar>
        <StartButton aria-label="Start"><WindowsIcon /></StartButton>
        {tasks.map(([name, icon], i) => (
          <TaskButton key={name} aria-label={name} $running={i !== 1} $active={i === 7}>{icon}</TaskButton>
        ))}
        <Clock>5:18</Clock>
      </TaskBar>

      <Watermark><WatermarkLogo /><span>@优优岁月</span></Watermark>
    </Page>
  );
}

export default App;
